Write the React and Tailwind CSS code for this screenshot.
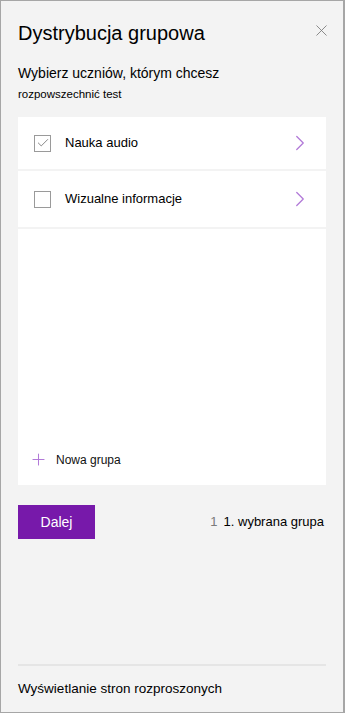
import { X, ChevronRight, Plus, Check } from 'lucide-react'

const groups = [
  { name: 'Nauka audio', checked: true, h: 'h-[54px]' },
  { name: 'Wizualne informacje', checked: false, h: 'h-[58px]' },
]

export default function App() {
  return (
    <div
      className="w-[345px] h-[713px] bg-[#f3f3f3] border border-[#a6a6a6] border-r-2 flex flex-col text-[#1a1a1a]"
      style={{ fontFamily: '"Liberation Sans", Arial, sans-serif' }}
    >
      <header className="flex items-start justify-between pl-[17px] pr-[12px] pt-[19px]">
        <h1 className="text-[20px] leading-[26px] text-black">Dystrybucja grupowa</h1>
        <button className="text-[#7a7a7a] mt-[1px]">
          <X size={19} strokeWidth={1.1} />
        </button>
      </header>

      <div className="px-[17px] mt-[18px]">
        <p className="text-[14px] leading-[18px] text-black">Wybierz uczniów, którym chcesz</p>
        <p className="text-[11.5px] leading-[16px] mt-[4px] text-black">rozpowszechnić test</p>
      </div>

      <section className="mx-[17px] mt-[15px] h-[368px] bg-white flex flex-col">
        {groups.map((g) => (
          <div key={g.name} className={`flex items-center ${g.h} pl-[16px] pr-[13px] border-b-2 border-[#f3f3f3]`}>
            <span className="size-[17px] border border-[#9a9a9a] grid place-items-center text-[#7f7f7f]">
              {g.checked && <Check size={14} strokeWidth={1.6} />}
            </span>
            <span className="ml-[14px] text-[13px] flex-1 text-black -mt-[1px]">{g.name}</span>
            <ChevronRight size={26} strokeWidth={1.2} className="text-[#b27ad8]" />
          </div>
        ))}
        <div className="flex-1" />
        <div className="flex items-center pl-[11px] pb-[16px]">
          <Plus size={19} strokeWidth={1.3} className="text-[#b27ad8]" />
          <span className="ml-[8px] text-[12px] text-[#111]">Nowa grupa</span>
        </div>
      </section>

      <div className="flex items-center justify-between mx-[17px] mt-[20px]">
        <button className="w-[77px] h-[34px] bg-[#7719aa] text-white text-[14px]">Dalej</button>
        <div className="text-[13px] pr-[2px]">
          <span className="text-[#7a7a7a]">1</span>
          <span className="ml-[6px] text-black">1. wybrana grupa</span>
        </div>
      </div>

      <div className="flex-1" />

      <footer className="mx-[17px] border-t-2 border-[#e5e5e5] pt-[13px] pb-[13px]">
        <p className="text-[13.5px] text-black">Wyświetlanie stron rozproszonych</p>
      </footer>
    </div>
  )
}
